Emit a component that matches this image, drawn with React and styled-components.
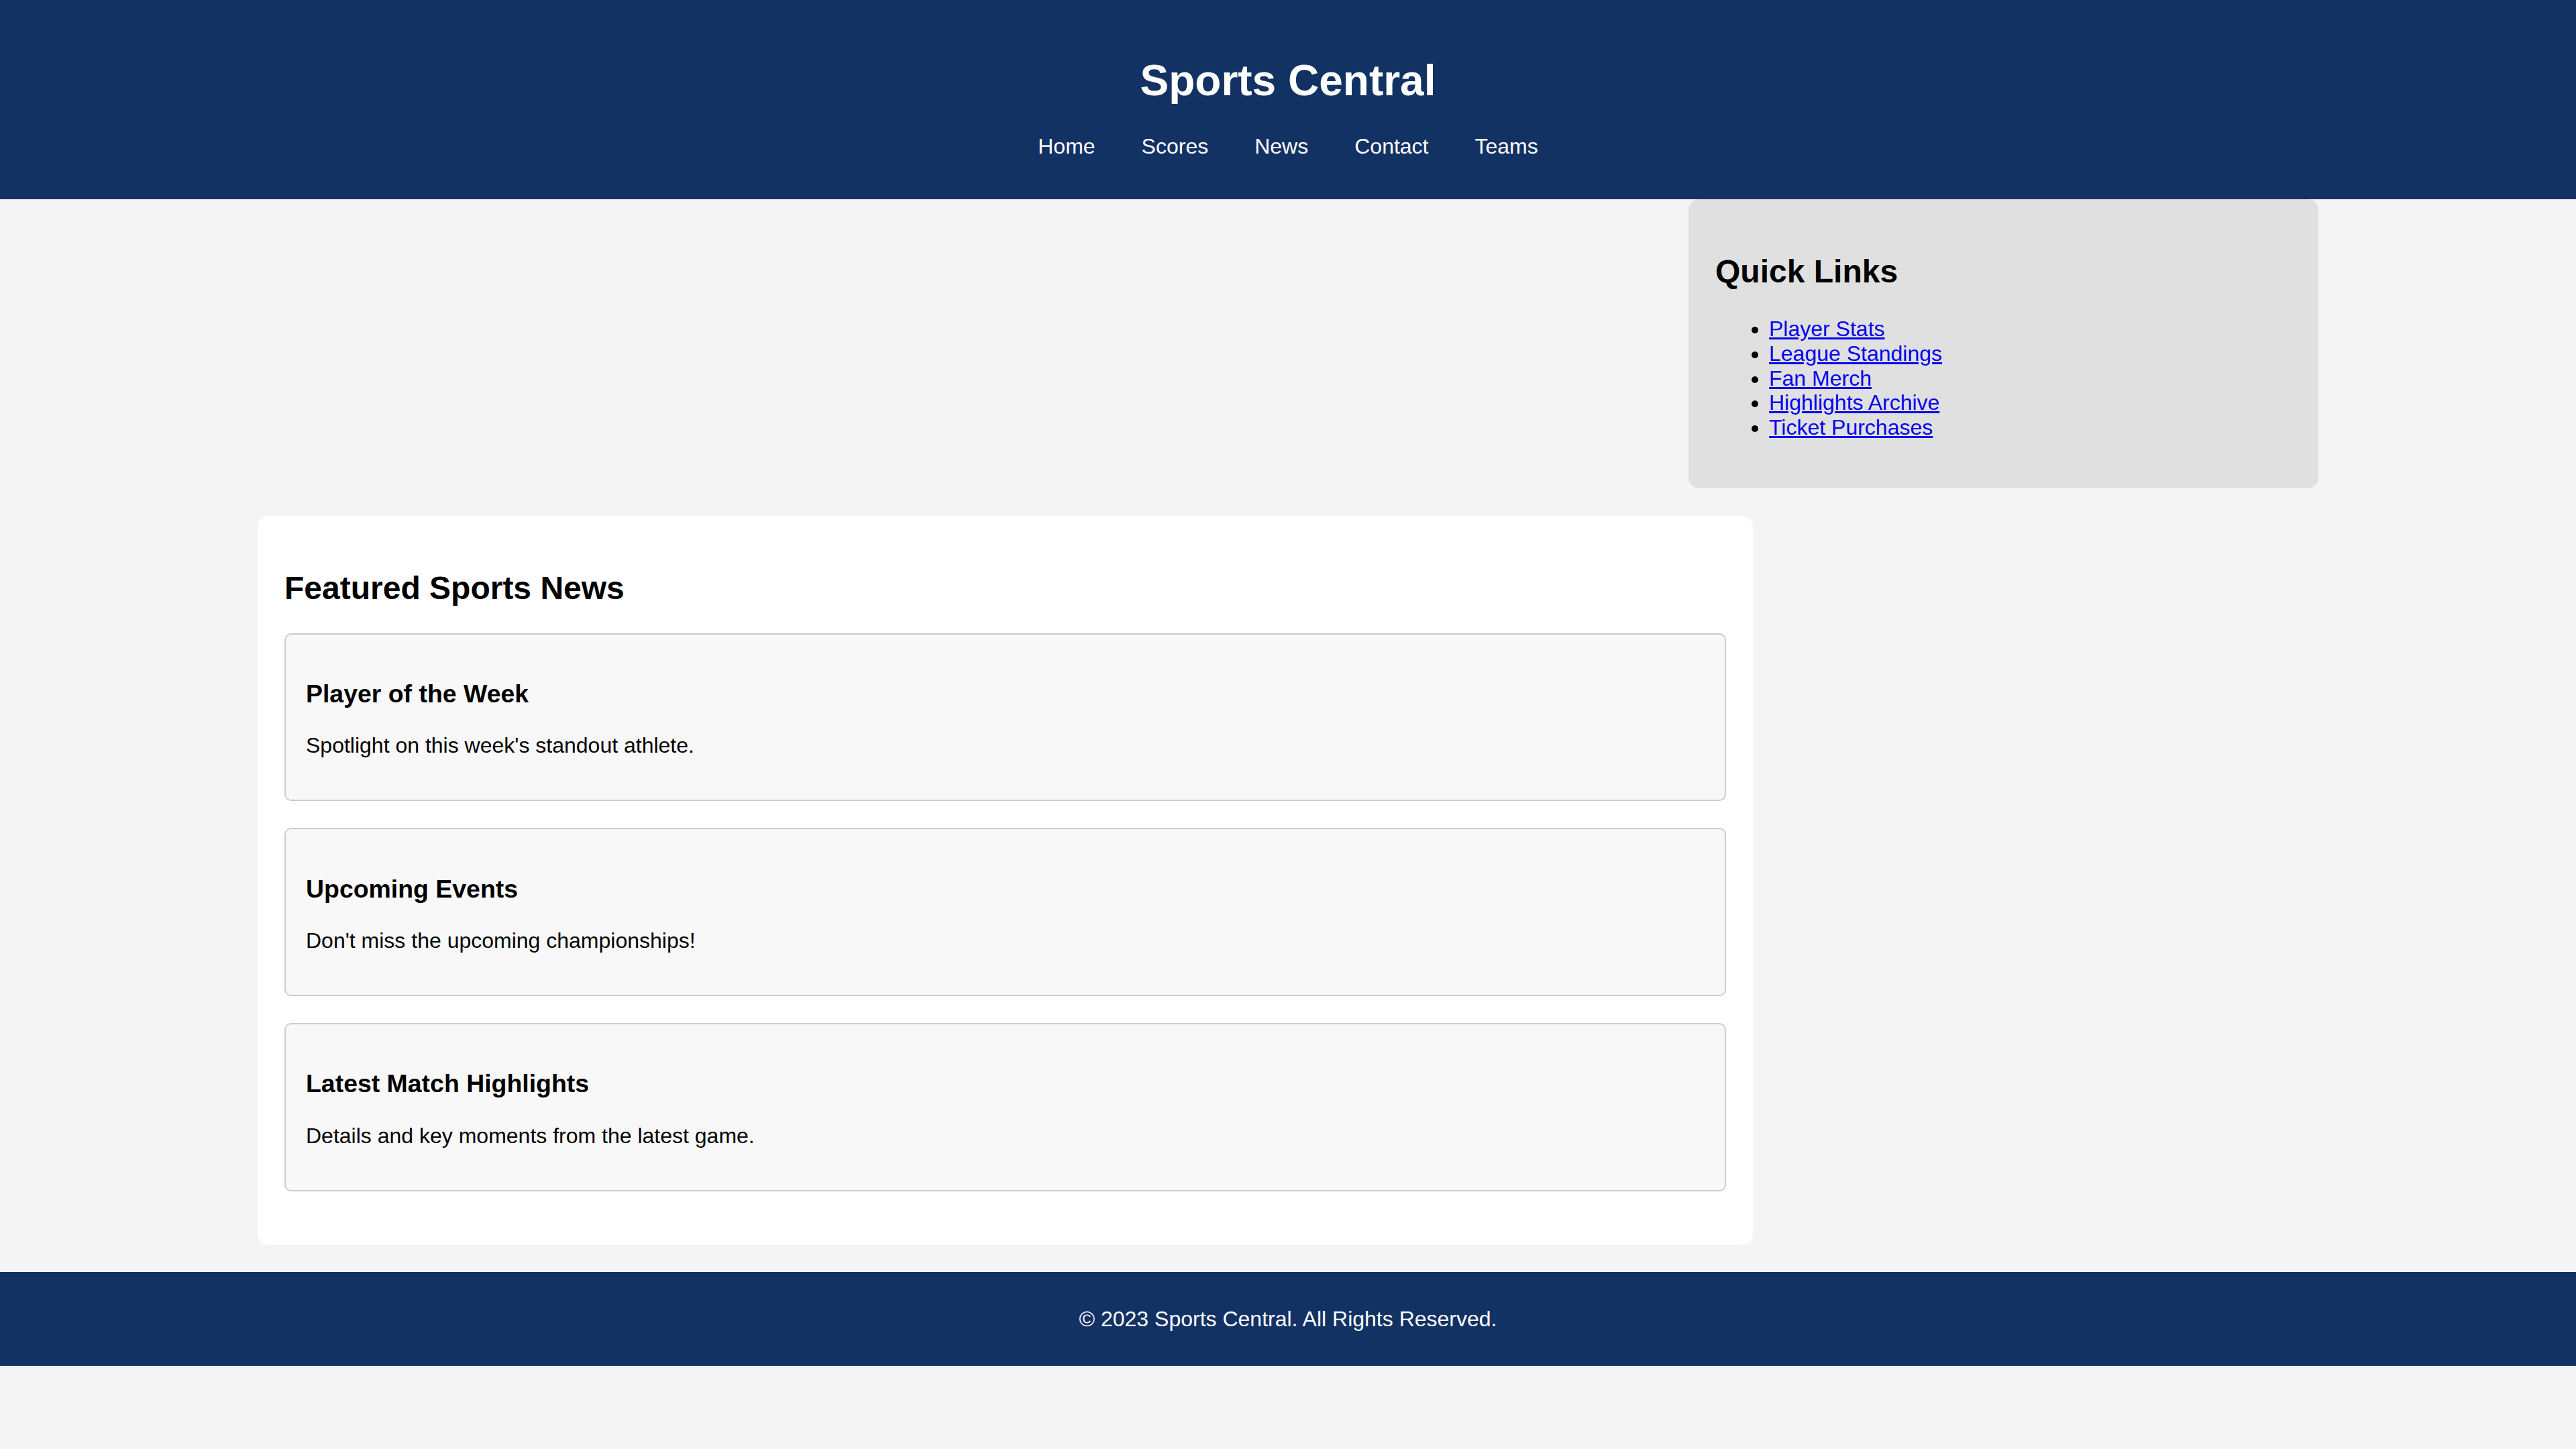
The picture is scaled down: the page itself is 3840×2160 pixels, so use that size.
import React from "react";
import styled, { createGlobalStyle } from "styled-components";

const GlobalStyle = createGlobalStyle`
  html, body {
    margin: 0;
    padding: 0;
    background: #f4f4f4;
    font-family: "Liberation Sans", Arial, sans-serif;
    font-size: 32px;
    color: #000;
  }
`;

const Header = styled.header`
  background: #133264;
  color: #fff;
  text-align: center;
  padding: 40px 0 60.5px;
`;

const Title = styled.h1`
  font-size: 64px;
  margin: 42.88px 0;
`;

const Nav = styled.nav`
  display: flex;
  justify-content: center;
  gap: 69px;
`;

const NavLink = styled.a`
  color: #fff;
  text-decoration: none;
  font-size: 32px;
`;

const Container = styled.div`
  width: 3072px;
  margin: 0 auto;
  display: flex;
  flex-direction: column;
`;

const Aside = styled.aside`
  align-self: flex-end;
  width: 939px;
  box-sizing: border-box;
  padding: 40px;
  background: #e0e0e0;
  border-radius: 16px;
`;

const SectionTitle = styled.h2`
  font-size: 48px;
  margin: 39.84px 0;
`;

const LinkList = styled.ul`
  margin: 32px 0;
  padding-left: 80px;
  line-height: 36.8px;
`;

const QuickLink = styled.a`
  color: #0000ee;
  text-decoration: underline;
`;

const Main = styled.main`
  width: 2229px;
  box-sizing: border-box;
  margin: 41px 0 40px;
  padding: 40px;
  background: #fff;
  border-radius: 16px;
`;

const NewsItem = styled.article`
  background: #f8f8f8;
  border: 2px solid #ccc;
  border-radius: 10px;
  padding: 30px;
  margin-bottom: 40px;
`;

const NewsTitle = styled.h3`
  font-size: 37.44px;
  margin: 37.44px 0;
`;

const NewsText = styled.p`
  margin: 32px 0;
  line-height: 36.8px;
`;

const Footer = styled.footer`
  background: #133264;
  color: #fff;
  text-align: center;
  padding: 20px 0;
`;

const FooterText = styled.p`
  margin: 32px 0;
  line-height: 36.8px;
`;

const navItems = ["Home", "Scores", "News", "Contact", "Teams"];

const links = [
  "Player Stats",
  "League Standings",
  "Fan Merch",
  "Highlights Archive",
  "Ticket Purchases",
];

const news = [
  { title: "Player of the Week", text: "Spotlight on this week's standout athlete." },
  { title: "Upcoming Events", text: "Don't miss the upcoming championships!" },
  { title: "Latest Match Highlights", text: "Details and key moments from the latest game." },
];

const App = () => {
  return (
    <>
      <GlobalStyle />
      <Header>
        <Title>Sports Central</Title>
        <Nav>
          {navItems.map((item) => (
            <NavLink key={item} href="#">
              {item}
            </NavLink>
          ))}
        </Nav>
      </Header>

      <Container>
        <Aside>
          <SectionTitle>Quick Links</SectionTitle>
          <LinkList>
            {links.map((link) => (
              <li key={link}>
                <QuickLink href="#">{link}</QuickLink>
              </li>
            ))}
          </LinkList>
        </Aside>

        <Main>
          <SectionTitle>Featured Sports News</SectionTitle>
          {news.map((item) => (
            <NewsItem key={item.title}>
              <NewsTitle>{item.title}</NewsTitle>
              <NewsText>{item.text}</NewsText>
            </NewsItem>
          ))}
        </Main>
      </Container>

      <Footer>
        <FooterText>&copy; 2023 Sports Central. All Rights Reserved.</FooterText>
      </Footer>
    </>
  );
};

export default App;
